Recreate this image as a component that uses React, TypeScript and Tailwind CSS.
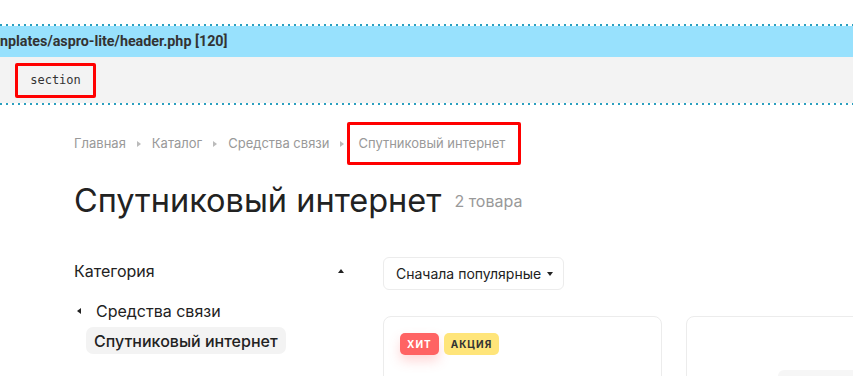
import React from 'react';

const Tri = ({ dir, className }: { dir: 'up' | 'down' | 'left' | 'right'; className?: string }) => {
  const pts = {
    up: '0,5 3,1 6,5',
    down: '0,1 3,5 6,1',
    left: '5,0 1,3 5,6',
    right: '1,0 5,3 1,6',
  }[dir];
  return (
    <svg width="6" height="6" viewBox="0 0 6 6" className={className}>
      <polygon points={pts} fill="currentColor" />
    </svg>
  );
};

const DotLine = () => (
  <div className="h-[2px] bg-[repeating-linear-gradient(90deg,#2a9fbf_0_2px,transparent_2px_6px)]" />
);

export default function App() {
  const crumbs = ['Главная', 'Каталог', 'Средства связи'];

  return (
    <div className="w-[853px] h-[376px] overflow-hidden bg-white font-['Inter',sans-serif] text-[#222]">
      <div className="h-[24px]" />
      {/* debug bar */}
      <DotLine />
      <div className="h-[31px] bg-[#98e1fd] flex items-center overflow-hidden">
        <span className="whitespace-nowrap text-[14.3px] font-bold text-[#333] font-['Roboto',sans-serif]">
          nplates/aspro-lite/header.php [120]
        </span>
      </div>
      <div className="h-[46px] bg-[#f3f3f3] flex items-center pl-[15px]">
        <div className="h-[35px] w-[81px] border-[3px] border-[#ff0000] rounded-[2px] flex items-center justify-center font-['DejaVu_Sans_Mono',monospace] text-[12px] text-[#333]">
          section
        </div>
      </div>
      <DotLine />

      <main className="pl-[74px]">
        {/* breadcrumbs */}
        <div className="mt-[17px] flex items-center text-[13px] text-[#999]">
          {crumbs.map(c => (
            <React.Fragment key={c}>
              <span>{c}</span>
              <Tri dir="right" className="mx-[10px] text-[#bbb]" />
            </React.Fragment>
          ))}
          <span className="ml-[-8px] flex h-[43px] items-center rounded-[2px] border-[3px] border-[#ff0000] pl-[8px] pr-[13px]">
            Спутниковый интернет
          </span>
        </div>

        <div className="mt-[16px] flex items-center gap-[13px]">
          <h1 className="text-[32.5px] leading-[40px] text-[#222]">Спутниковый интернет</h1>
          <span className="text-[16px] text-[#999]">2 товара</span>
        </div>

        <div className="mt-[36px] flex gap-[33px]">
          <aside className="w-[276px] shrink-0">
            <div className="mt-[2px] flex items-center justify-between pr-[6px]">
              <span className="text-[16px] text-[#222]">Категория</span>
              <Tri dir="up" className="text-[#222]" />
            </div>
            <div className="mt-[16px] flex items-center">
              <Tri dir="left" className="ml-[2px] text-[#222]" />
              <span className="ml-[14px] text-[16px]">Средства связи</span>
            </div>
            <div className="mt-[4px] ml-[12px] inline-flex h-[27px] items-center rounded-[7px] bg-[#f3f3f3] px-[8px] text-[16px] font-medium">
              Спутниковый интернет
            </div>
          </aside>

          <section className="flex-1">
            <button className="h-[33px] w-[181px] flex items-center gap-[6px] rounded-[6px] border border-[#ececec] pl-[12px] text-[14px] text-[#222]">
              Сначала популярные
              <Tri dir="down" className="text-[#222]" />
            </button>
            <div className="mt-[26px] flex gap-[24px]">
              <div className="w-[279px] h-[80px] shrink-0 rounded-[8px] border border-[#ececec] pl-[16px] pt-[16px]">
                <div className="flex gap-[5px]">
                  <span className="h-[22px] px-[7px] flex items-center rounded-[5px] bg-[#ff6363] text-white text-[10px] font-bold tracking-[1px] shadow-[0_6px_12px_rgba(255,99,99,0.25)]">
                    ХИТ
                  </span>
                  <span className="h-[22px] px-[7px] flex items-center rounded-[5px] bg-[#ffe57a] text-[#333] text-[10px] font-bold tracking-[1px]">
                    АКЦИЯ
                  </span>
                </div>
              </div>
              <div className="w-[279px] h-[80px] shrink-0 rounded-[8px] border border-[#ececec] pl-[91px] pt-[53px]">
                <div className="h-[20px] w-[120px] rounded-t-[6px] bg-[#f6f6f6]" />
              </div>
            </div>
          </section>
        </div>
      </main>
    </div>
  );
}
